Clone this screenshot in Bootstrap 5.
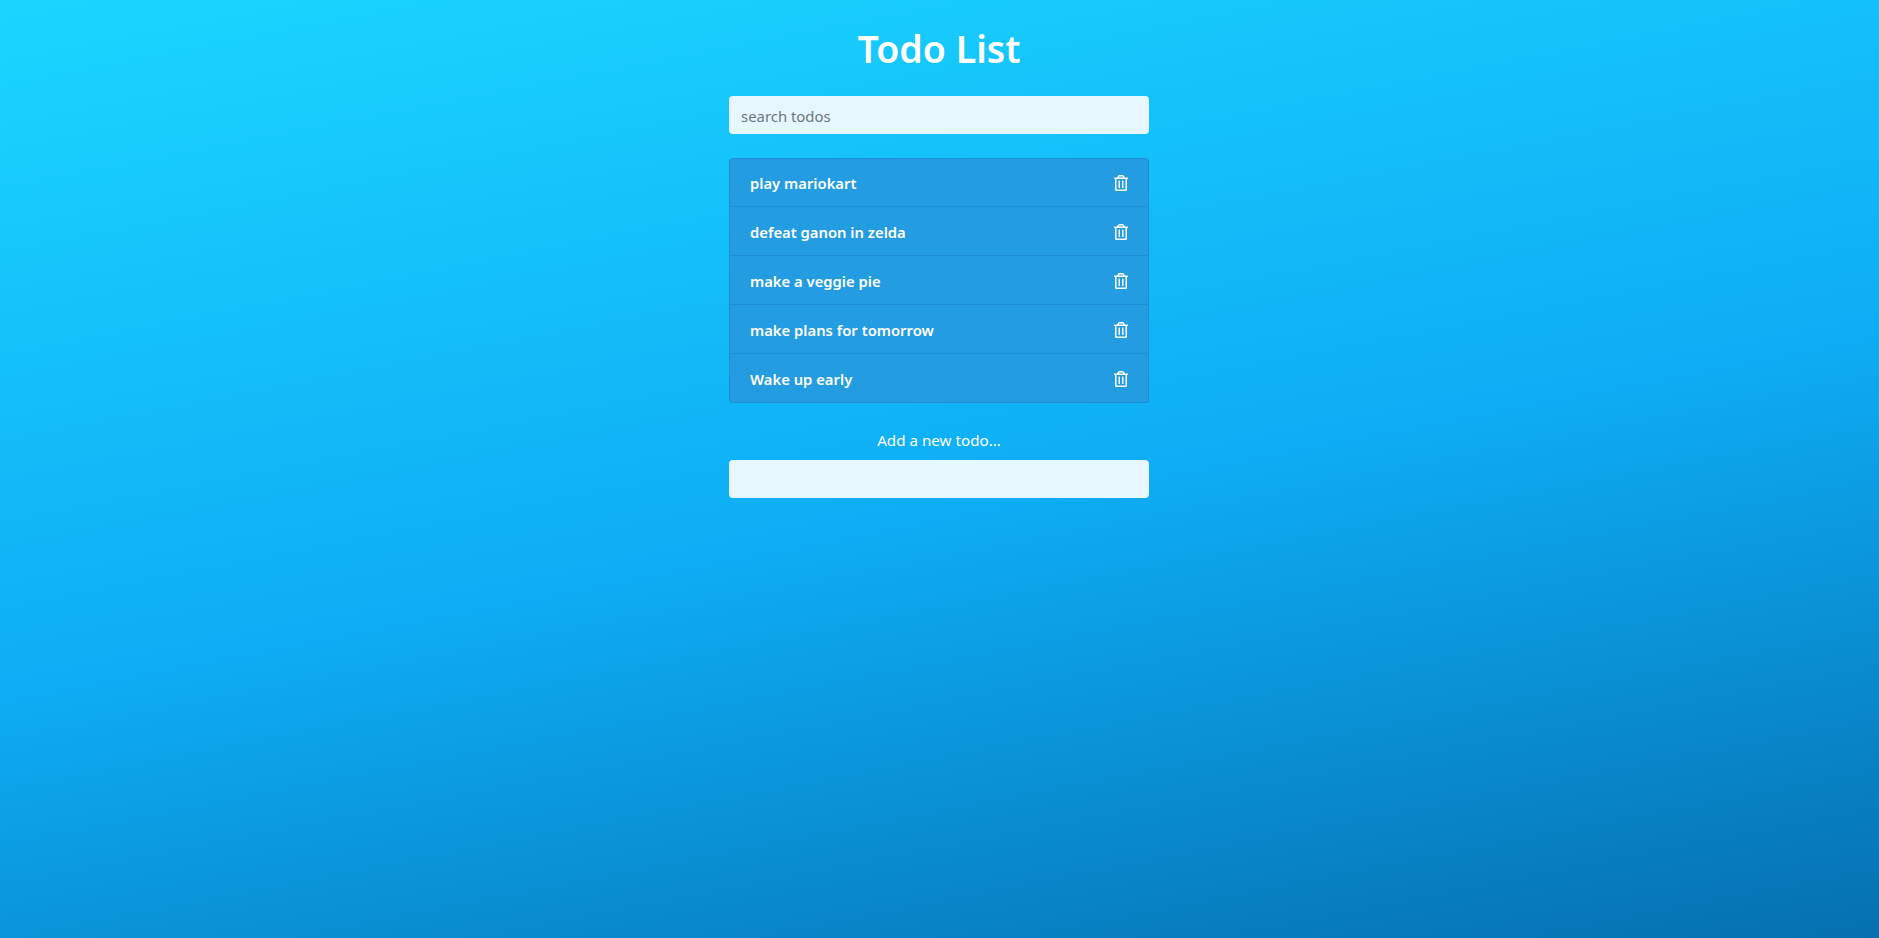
<!DOCTYPE html>
<html lang="en">
<head>
  <meta charset="UTF-8" />
  <meta name="viewport" content="width=device-width, initial-scale=1.0"/>
  <title>Todo List</title>
  <link href="https://cdn.jsdelivr.net/npm/bootstrap@5.3.0/dist/css/bootstrap.min.css" rel="stylesheet">
  <style>
    html, body { height: 100%; }
    body {
      font-family: "Noto Sans", "Open Sans", sans-serif;
      background: linear-gradient(169deg, #1bd6ff 0%, #0eadf5 53%, #0570b0 100%);
      color: #fff;
    }
    .todo-box { width: 451px; padding: 0 16px 0 15px; }
    .todo-title { font-size: 37.5px; font-weight: 600; line-height: 48px; margin: 25px 0 23px; }
    .todo-input {
      height: 38px;
      background: #e7f7ff;
      border: 0;
      border-radius: 4px;
      padding: 7px 12px 5px;
      font-size: 14.9px;
    }
    .todo-input:focus { background: #e7f7ff; box-shadow: none; }
    .todo-input::placeholder { color: #6c757d; }
    .todo-list { margin: 24px 0 25px; border-radius: 4px; }
    .todo-item {
      height: 49px;
      padding: 1px 20px 0 20px;
      background: #249ce2;
      border-color: #1f8dd3;
      color: #fff;
      font-weight: 600;
      font-size: 14.8px;
    }
    .todo-text { padding-top: 1px; }
    .todo-add { font-size: 15.2px; line-height: 24px; margin-bottom: 8px; }
    .trash-icon { width: 14px; height: 16px; display: block; fill: #fff; }
  </style>
</head>
<body>
  <div class="todo-box mx-auto">
    <h1 class="todo-title text-center">Todo List</h1>

    <form>
      <input type="text" class="form-control todo-input" placeholder="search todos">
    </form>

    <ul class="list-group todo-list">
      <li class="list-group-item todo-item d-flex justify-content-between align-items-center">
        <span class="todo-text">play mariokart</span>
        <svg class="trash-icon" viewBox="0 0 448 512"><path d="M268 416h24a12 12 0 0 0 12-12V188a12 12 0 0 0-12-12h-24a12 12 0 0 0-12 12v216a12 12 0 0 0 12 12zM432 80h-82.41l-34-56.7A48 48 0 0 0 274.41 0H173.59a48 48 0 0 0-41.16 23.3L98.41 80H16A16 16 0 0 0 0 96v16a16 16 0 0 0 16 16h16v336a48 48 0 0 0 48 48h288a48 48 0 0 0 48-48V128h16a16 16 0 0 0 16-16V96a16 16 0 0 0-16-16zM171.84 50.91A6 6 0 0 1 177 48h94a6 6 0 0 1 5.15 2.91L293.61 80H154.39zM368 464H80V128h288zm-212-48h24a12 12 0 0 0 12-12V188a12 12 0 0 0-12-12h-24a12 12 0 0 0-12 12v216a12 12 0 0 0 12 12z"/></svg>
      </li>
      <li class="list-group-item todo-item d-flex justify-content-between align-items-center">
        <span class="todo-text">defeat ganon in zelda</span>
        <svg class="trash-icon" viewBox="0 0 448 512"><path d="M268 416h24a12 12 0 0 0 12-12V188a12 12 0 0 0-12-12h-24a12 12 0 0 0-12 12v216a12 12 0 0 0 12 12zM432 80h-82.41l-34-56.7A48 48 0 0 0 274.41 0H173.59a48 48 0 0 0-41.16 23.3L98.41 80H16A16 16 0 0 0 0 96v16a16 16 0 0 0 16 16h16v336a48 48 0 0 0 48 48h288a48 48 0 0 0 48-48V128h16a16 16 0 0 0 16-16V96a16 16 0 0 0-16-16zM171.84 50.91A6 6 0 0 1 177 48h94a6 6 0 0 1 5.15 2.91L293.61 80H154.39zM368 464H80V128h288zm-212-48h24a12 12 0 0 0 12-12V188a12 12 0 0 0-12-12h-24a12 12 0 0 0-12 12v216a12 12 0 0 0 12 12z"/></svg>
      </li>
      <li class="list-group-item todo-item d-flex justify-content-between align-items-center">
        <span class="todo-text">make a veggie pie</span>
        <svg class="trash-icon" viewBox="0 0 448 512"><path d="M268 416h24a12 12 0 0 0 12-12V188a12 12 0 0 0-12-12h-24a12 12 0 0 0-12 12v216a12 12 0 0 0 12 12zM432 80h-82.41l-34-56.7A48 48 0 0 0 274.41 0H173.59a48 48 0 0 0-41.16 23.3L98.41 80H16A16 16 0 0 0 0 96v16a16 16 0 0 0 16 16h16v336a48 48 0 0 0 48 48h288a48 48 0 0 0 48-48V128h16a16 16 0 0 0 16-16V96a16 16 0 0 0-16-16zM171.84 50.91A6 6 0 0 1 177 48h94a6 6 0 0 1 5.15 2.91L293.61 80H154.39zM368 464H80V128h288zm-212-48h24a12 12 0 0 0 12-12V188a12 12 0 0 0-12-12h-24a12 12 0 0 0-12 12v216a12 12 0 0 0 12 12z"/></svg>
      </li>
      <li class="list-group-item todo-item d-flex justify-content-between align-items-center">
        <span class="todo-text">make plans for tomorrow</span>
        <svg class="trash-icon" viewBox="0 0 448 512"><path d="M268 416h24a12 12 0 0 0 12-12V188a12 12 0 0 0-12-12h-24a12 12 0 0 0-12 12v216a12 12 0 0 0 12 12zM432 80h-82.41l-34-56.7A48 48 0 0 0 274.41 0H173.59a48 48 0 0 0-41.16 23.3L98.41 80H16A16 16 0 0 0 0 96v16a16 16 0 0 0 16 16h16v336a48 48 0 0 0 48 48h288a48 48 0 0 0 48-48V128h16a16 16 0 0 0 16-16V96a16 16 0 0 0-16-16zM171.84 50.91A6 6 0 0 1 177 48h94a6 6 0 0 1 5.15 2.91L293.61 80H154.39zM368 464H80V128h288zm-212-48h24a12 12 0 0 0 12-12V188a12 12 0 0 0-12-12h-24a12 12 0 0 0-12 12v216a12 12 0 0 0 12 12z"/></svg>
      </li>
      <li class="list-group-item todo-item d-flex justify-content-between align-items-center">
        <span class="todo-text">Wake up early</span>
        <svg class="trash-icon" viewBox="0 0 448 512"><path d="M268 416h24a12 12 0 0 0 12-12V188a12 12 0 0 0-12-12h-24a12 12 0 0 0-12 12v216a12 12 0 0 0 12 12zM432 80h-82.41l-34-56.7A48 48 0 0 0 274.41 0H173.59a48 48 0 0 0-41.16 23.3L98.41 80H16A16 16 0 0 0 0 96v16a16 16 0 0 0 16 16h16v336a48 48 0 0 0 48 48h288a48 48 0 0 0 48-48V128h16a16 16 0 0 0 16-16V96a16 16 0 0 0-16-16zM171.84 50.91A6 6 0 0 1 177 48h94a6 6 0 0 1 5.15 2.91L293.61 80H154.39zM368 464H80V128h288zm-212-48h24a12 12 0 0 0 12-12V188a12 12 0 0 0-12-12h-24a12 12 0 0 0-12 12v216a12 12 0 0 0 12 12z"/></svg>
      </li>
    </ul>

    <form>
      <label class="todo-add d-block text-center">Add a new todo...</label>
      <input type="text" class="form-control todo-input">
    </form>
  </div>

  <script src="https://cdn.jsdelivr.net/npm/bootstrap@5.3.0/dist/js/bootstrap.bundle.min.js"></script>
</body>
</html>
